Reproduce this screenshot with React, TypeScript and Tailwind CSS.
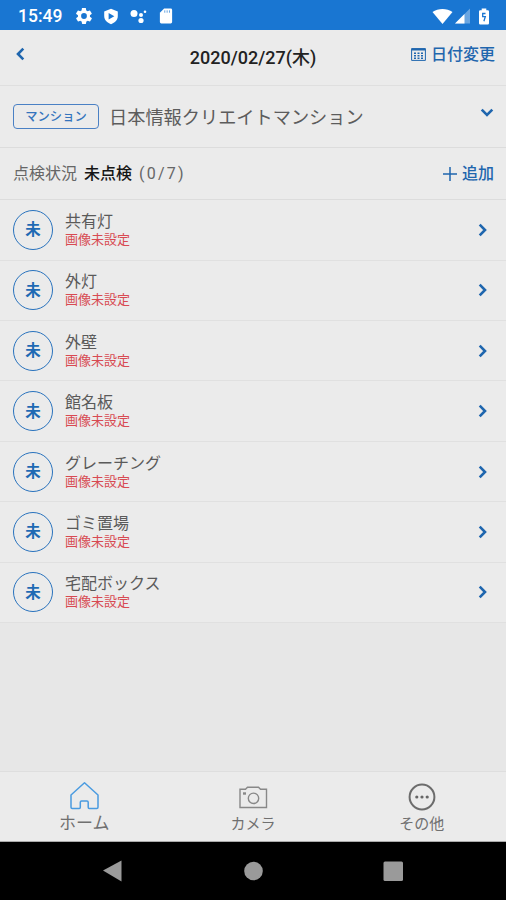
import React from 'react';

// Inspection points of the selected building
type InspectionItem = {
  id: number;
  name: string;
  note: string;
};

const items: InspectionItem[] = [
  { id: 1, name: '共有灯', note: '画像未設定' },
  { id: 2, name: '外灯', note: '画像未設定' },
  { id: 3, name: '外壁', note: '画像未設定' },
  { id: 4, name: '館名板', note: '画像未設定' },
  { id: 5, name: 'グレーチング', note: '画像未設定' },
  { id: 6, name: 'ゴミ置場', note: '画像未設定' },
  { id: 7, name: '宅配ボックス', note: '画像未設定' },
];

const StatusBar: React.FC = () => (
  <div className="flex h-[30px] shrink-0 items-center bg-[#1976d2] pt-0.5 text-white">
    <span className="mt-px ml-[18px] w-[58px] font-[Roboto] text-[17.5px] leading-none font-medium">15:49</span>
    <svg width="16" height="16" viewBox="2 2 20 20" fill="currentColor">
      <path d="M19.4 13c.04-.3.07-.6.07-1s-.03-.7-.07-1l2.1-1.6c.2-.2.25-.4.1-.7l-2-3.4c-.1-.2-.4-.3-.6-.2l-2.5 1c-.5-.4-1.1-.7-1.7-1l-.4-2.6c0-.3-.2-.5-.5-.5h-4c-.2 0-.5.2-.5.4l-.4 2.7c-.6.2-1.2.6-1.7 1l-2.5-1c-.2-.1-.5 0-.6.2l-2 3.4c-.1.2-.1.5.1.7L4.5 11c-.1.3-.1.7-.1 1s0 .7.1 1l-2.1 1.6c-.2.2-.2.4-.1.7l2 3.4c.1.2.4.3.6.2l2.5-1c.5.4 1.1.7 1.7 1l.4 2.6c0 .3.2.5.5.5h4c.3 0 .5-.2.5-.5l.4-2.6c.6-.3 1.2-.6 1.7-1l2.5 1c.2.1.5 0 .6-.2l2-3.4c.1-.2.1-.5-.1-.7L19.4 13zM12 15.6a3.6 3.6 0 1 1 0-7.2 3.6 3.6 0 0 1 0 7.2z" />
    </svg>
    <svg className="ml-[11px]" width="16" height="17" viewBox="0 0 16 18">
      <path d="M8 .8l7.2 2.8v5c0 4-3 7.3-7.2 8.6C3.8 15.9.8 12.6.8 8.6v-5z" fill="currentColor" />
      <path d="M5.5 5.2v7l6-3.5z" fill="#1976d2" />
    </svg>
    <svg className="ml-[11px]" width="17" height="16" viewBox="0 0 17 16" fill="currentColor">
      <circle cx="4" cy="5.5" r="3.5" />
      <circle cx="11" cy="7" r="2" />
      <circle cx="11" cy="12.5" r="2.6" />
      <circle cx="15" cy="3.8" r="1.3" />
    </svg>
    <svg className="ml-[12px]" width="14" height="16" viewBox="0 0 14 17">
      <path d="M5 .5h7q1.5 0 1.5 1.5v13q0 1.5-1.5 1.5H2Q.5 16.5.5 15V5z" fill="currentColor" />
      <path d="M5.7 2.5v2.5M8.2 2.5v2.5M10.7 2.5v2.5" stroke="#1976d2" opacity=".7" />
    </svg>
    <svg className="ml-auto" width="21" height="17" viewBox="0 0 21 17">
      <path d="M.5 4C6 .1 15 .1 20.5 4l-10 12z" fill="currentColor" />
    </svg>
    <svg className="ml-0.5" width="15" height="16" viewBox="0 0 15 16" fill="currentColor">
      <path d="M0 15.5L15 .5v15z" opacity=".35" />
      <path d="M0 15.5L9.5 6v9.5z" />
    </svg>
    <svg className="mr-4 ml-[8px]" width="12" height="17" viewBox="0 0 12 17">
      <path d="M3.7.5h4.6v1.7h1.5q1.2 0 1.2 1.2v11.9q0 1.2-1.2 1.2H2.2Q1 16.5 1 15.3V3.4q0-1.2 1.2-1.2h1.5z" fill="currentColor" />
      <path d="M7.5 5.5H4.7v3.2h2.6l-1.4 4.5" fill="none" stroke="#1976d2" strokeWidth="1.3" />
    </svg>
  </div>
);

const Chevron: React.FC<{ className?: string }> = ({ className }) => (
  <svg className={className} width="10" height="14" viewBox="0 0 10 14" fill="none" stroke="currentColor" strokeWidth="2.6">
    <path d="M1.7 1.7L7 7l-5.3 5.3" />
  </svg>
);

const Header: React.FC = () => (
  <header className="grid h-[56px] shrink-0 grid-cols-[1fr_auto_1fr] border-b border-[#dfdfdf] text-[#1f66ae]">
    <Chevron className="mt-[17px] ml-[15px] rotate-180" />
    <h1 className="mt-[15px] text-[18px] leading-[26px] font-medium whitespace-nowrap text-[#222]">
      2020/02/27(木)
    </h1>
    <button className="mt-[12px] mr-[11px] flex h-[26px] items-center justify-self-end text-[16px] leading-[26px] font-medium">
      <svg className="mr-[5px] mb-0.5" width="15" height="13" viewBox="0 0 15 13" fill="none" stroke="currentColor">
        <path d="M.6.6h13.8v11.8H.6z" strokeWidth="1" />
        <path d="M.6 1.5h13.8" strokeWidth="2" />
        <path d="M3 5.2h9.5M3 7.7h9.5M3 10.2h9.5" strokeWidth="1.6" strokeDasharray="2 1.5" />
      </svg>
      日付変更
    </button>
  </header>
);

const TabBar: React.FC = () => (
  <nav className="grid h-[71px] shrink-0 grid-cols-3 border-t border-b border-t-[#dedede] border-b-[#aaa] bg-[#ebebeb] text-[#707070]">
    <div className="flex flex-col items-center">
      <svg className="mt-[9px] h-[30px] w-[30px] text-[#4a9be0]" viewBox="0 0 30 30" fill="none" stroke="currentColor" strokeWidth="1.5" strokeLinejoin="round">
        <path d="M15.5 1.8L2 14v12.3q0 1.2 1.2 1.2h7.100q1 0 1-1.200v-5q0-1.200 1.200-1.200h5.500q1.200 0 1.200 1.200v5q0 1.200 1 1.200h7.600q1.200 0 1.200-1.200V14z" />
      </svg>
      <span className="text-[17px] leading-[25px]">ホーム</span>
    </div>
    <div className="flex flex-col items-center">
      <svg className="mt-[9px] h-[30px] w-[30px]" viewBox="0 0 30 30" fill="none" stroke="#888" strokeWidth="1.4">
        <path d="M2 8.200h5.500l2-2h11l2 2h6v18.300H2z" />
        <circle cx="15.500" cy="17.300" r="5.200" />
        <path d="M5 12.500h3" strokeWidth="2.400" />
      </svg>
      <span className="text-[15px] leading-[27px]">カメラ</span>
    </div>
    <div className="flex flex-col items-center">
      <svg className="mt-[9px] h-[30px] w-[30px]" viewBox="0 0 30 30">
        <circle cx="15" cy="16" r="12.4" fill="none" stroke="#6c6c6c" strokeWidth="2" />
        <g fill="#666">
          <circle cx="9.8" cy="16" r="1.6" />
          <circle cx="15" cy="16" r="1.6" />
          <circle cx="20.2" cy="16" r="1.6" />
        </g>
      </svg>
      <span className="text-[15px] leading-[27px]">その他</span>
    </div>
  </nav>
);

const App: React.FC = () => {
  return (
    <div className="flex h-[900px] w-[506px] flex-col overflow-hidden bg-[#e7e7e7] font-[Roboto,'Noto_Sans_CJK_JP',sans-serif]">
      <StatusBar />
      <div className="flex flex-col bg-[#ebebeb]">
        <Header />

        <section className="flex h-[62px] items-center border-b border-[#dcdcdc] pl-[13px]">
          <span className="flex h-[25px] w-[86px] items-center justify-center rounded-[4px] border-[1.5px] border-[#4a80c4] pt-0.5 text-[12.3px] font-medium text-[#3474bd]">
            マンション
          </span>
          <span className="mt-0.5 ml-[10px] text-[18.2px] text-[#5c5c5c]">日本情報クリエイトマンション</span>
          <Chevron className="mr-[14px] mb-2 ml-auto rotate-90 text-[#1f66ae]" />
        </section>

        <section className="flex h-[52.3px] items-center border-b border-[#dcdcdc] pt-px pr-[12px] pl-[13px] text-[16px] text-[#666]">
          <span>点検状況</span>
          <span className="ml-[7px] font-medium text-[#161616]">未点検</span>
          <span className="ml-[7px] tracking-[2.2px]">(0/7)</span>
          <button className="ml-auto flex items-center font-medium text-[#1f66ae]">
            <svg className="mr-[5px]" width="14" height="14" viewBox="0 0 14 14" stroke="currentColor" strokeWidth="1.5">
              <path d="M7 0v14M0 7h14" />
            </svg>
            追加
          </button>
        </section>

        <ul>
          {items.map((item) => (
            <li key={item.id} className="flex h-[60.4px] items-center border-b border-[#e0e0e0] pl-[13px]">
              <span className="flex h-10 w-10 items-center justify-center rounded-full border border-[#2872bd] pt-0.5 text-[15.5px] font-bold text-[#1f6ab4]">
                未
              </span>
              <div className="ml-3">
                <p className="text-[16px] leading-[19px] text-[#5a5a5a]">{item.name}</p>
                <p className="text-[13px] leading-[17px] text-[#d84a52]">{item.note}</p>
              </div>
              <Chevron className="mr-[18px] ml-auto text-[#1f66ae]" />
            </li>
          ))}
        </ul>
      </div>

      <div className="flex-1" />
      <TabBar />

      {/* Android system navigation */}
      <div className="flex h-[58px] shrink-0 items-center bg-black">
        <svg width="506" height="58" viewBox="0 0 506 58" fill="#9a9a9a">
          <path d="M103 28.5L121.5 18.5v21z" />
          <circle cx="253.5" cy="29" r="9.3" />
          <rect x="383.5" y="19.5" width="19.5" height="19.5" rx="1.5" />
        </svg>
      </div>
    </div>
  );
};

export default App;
